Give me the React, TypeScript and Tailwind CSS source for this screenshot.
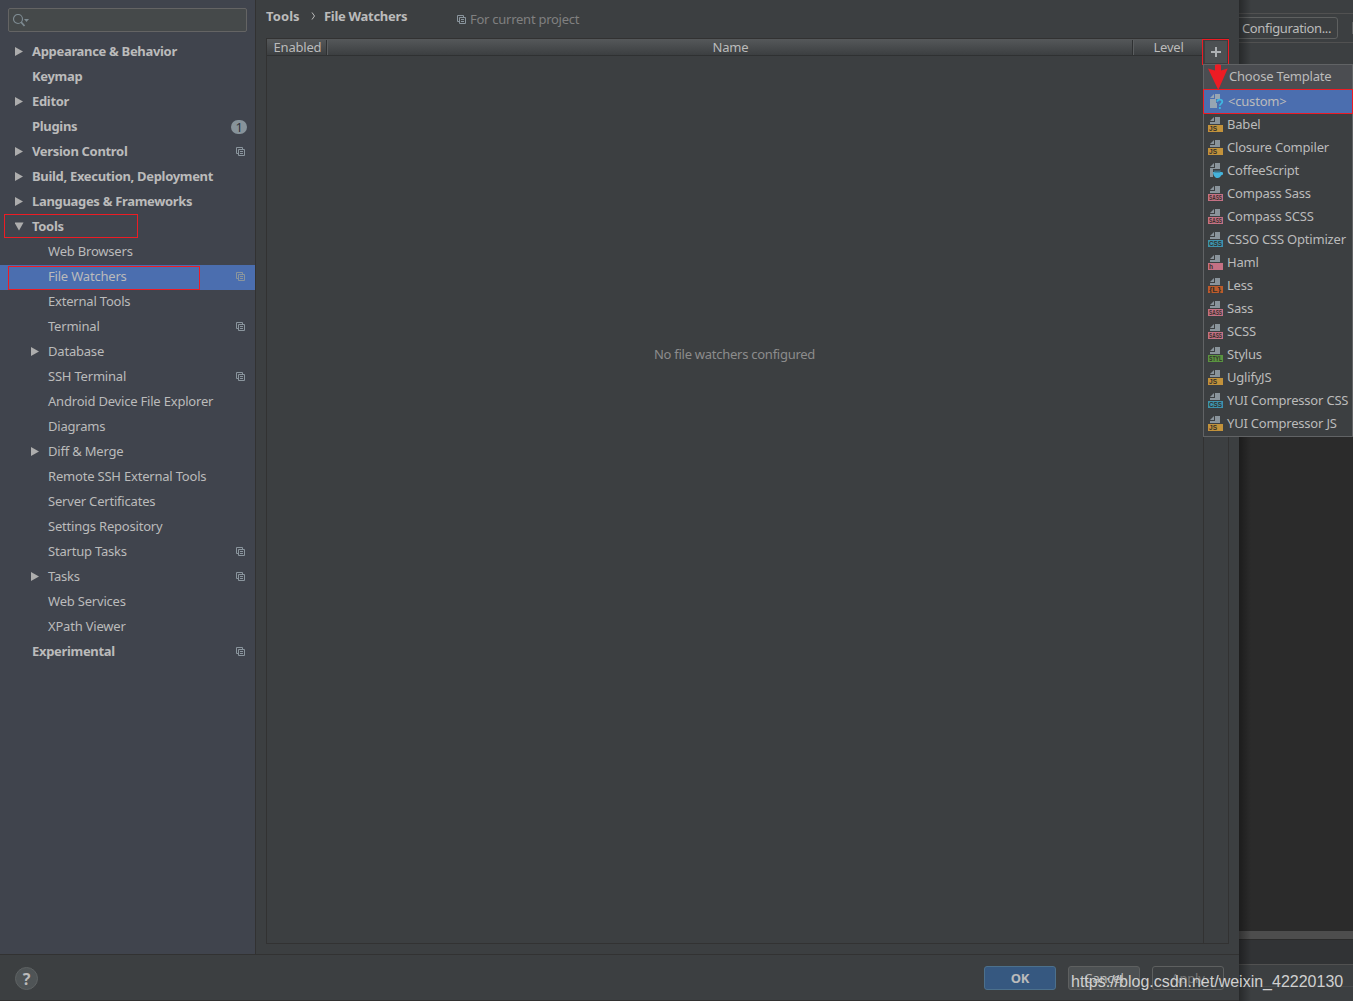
import React from 'react';

interface TreeItem {
    label: string;
    level?: number;
    arrow?: 'right' | 'down';
    copy?: boolean;
    badge?: number;
    selected?: boolean;
    marked?: boolean;
}

const treeItems: TreeItem[] = [
    { label: 'Appearance & Behavior', arrow: 'right' },
    { label: 'Keymap' },
    { label: 'Editor', arrow: 'right' },
    { label: 'Plugins', badge: 1 },
    { label: 'Version Control', arrow: 'right', copy: true },
    { label: 'Build, Execution, Deployment', arrow: 'right' },
    { label: 'Languages & Frameworks', arrow: 'right' },
    { label: 'Tools', arrow: 'down', marked: true },
    { label: 'Web Browsers', level: 1 },
    { label: 'File Watchers', level: 1, copy: true, selected: true, marked: true },
    { label: 'External Tools', level: 1 },
    { label: 'Terminal', level: 1, copy: true },
    { label: 'Database', level: 1, arrow: 'right' },
    { label: 'SSH Terminal', level: 1, copy: true },
    { label: 'Android Device File Explorer', level: 1 },
    { label: 'Diagrams', level: 1 },
    { label: 'Diff & Merge', level: 1, arrow: 'right' },
    { label: 'Remote SSH External Tools', level: 1 },
    { label: 'Server Certificates', level: 1 },
    { label: 'Settings Repository', level: 1 },
    { label: 'Startup Tasks', level: 1, copy: true },
    { label: 'Tasks', level: 1, arrow: 'right', copy: true },
    { label: 'Web Services', level: 1 },
    { label: 'XPath Viewer', level: 1 },
    { label: 'Experimental', copy: true },
];

interface Template {
    label: string;
    tag?: string;
    color?: string;
    tagWidth?: number;
}

const templates: Template[] = [
    { label: 'Babel', tag: 'JS', color: '#c2923b', tagWidth: 8 },
    { label: 'Closure Compiler', tag: 'JS', color: '#c2923b', tagWidth: 8 },
    { label: 'CoffeeScript' },
    { label: 'Compass Sass', tag: 'SASS', color: '#c57184', tagWidth: 13 },
    { label: 'Compass SCSS', tag: 'SASS', color: '#c57184', tagWidth: 13 },
    { label: 'CSSO CSS Optimizer', tag: 'CSS', color: '#3d93ae', tagWidth: 13 },
    { label: 'Haml', tag: 'h', color: '#c57184', tagWidth: 4 },
    { label: 'Less', tag: '{L}', color: '#bd5b2b', tagWidth: 12 },
    { label: 'Sass', tag: 'SASS', color: '#c57184', tagWidth: 13 },
    { label: 'SCSS', tag: 'SASS', color: '#c57184', tagWidth: 13 },
    { label: 'Stylus', tag: 'STYL', color: '#5a9440', tagWidth: 13 },
    { label: 'UglifyJS', tag: 'JS', color: '#c2923b', tagWidth: 8 },
    { label: 'YUI Compressor CSS', tag: 'CSS', color: '#3d93ae', tagWidth: 13 },
    { label: 'YUI Compressor JS', tag: 'JS', color: '#c2923b', tagWidth: 8 },
];

const CopyIcon: React.FC = () => (
    <svg width="9" height="9" viewBox="0 0 9 9" fill="none" stroke="#8a959d" className="shrink-0">
        <path d="M2.5 6.5h-2v-6h6v2M2.500 2.500h6v6h-6zM4 4.500h3M4 6.500h3" />
    </svg>
);

const Arrow: React.FC<{ dir?: 'right' | 'down' }> = ({ dir }) => (
    <svg width="9" height="9" viewBox="0 0 9 9" fill="#adadad" className="shrink-0">
        {dir === 'right' && <path d="M0 0v9l8-4.500z" />}
        {dir === 'down' && <path d="M-.5 .5h9l-4.500 8z" />}
    </svg>
);

const FileIcon: React.FC<{ tag?: string; color?: string; tagWidth?: number }> = ({ tag, color, tagWidth }) => (
    <svg width="16" height="16" viewBox="0 0 16 16" className="shrink-0">
        <path d="M2 5l4-4v4z" fill="#8a949b" />
        {tag ? (
            <>
                <path d="M7 1h5v7H2V6h5z" fill="#8a949b" />
                <path d="M0 9h15v7H0z" fill={color} />
                <text
                    x="1"
                    y="15"
                    textLength={tagWidth}
                    lengthAdjust="spacingAndGlyphs"
                    fill="#33302b"
                    className="font-['Liberation_Sans'] text-[7px] font-bold tracking-normal"
                >
                    {tag}
                </text>
            </>
        ) : (
            <>
                <path d="M7 1h5v6H5v8H2V6h5z" fill="#8a949b" />
                <path d="M5 10h8.500l1.500.5v2l-2 1c-.5 1.500-1.500 2.500-3.500 2.500S5.200 14 5 10z" fill="#44b3dc" />
                <path d="M5.500 8.500h7.500l-1 2H6.500z" fill="#3c6f86" />
            </>
        )}
    </svg>
);

const CustomIcon: React.FC = () => (
    <svg width="16" height="16" viewBox="0 0 16 16" className="shrink-0">
        <path d="M2 5l4-4v4z" fill="#97a5b3" />
        <path d="M7 1h5v5H8v4h1v5H2V6h5z" fill="#97a5b3" />
        <path d="M9.300 8.800c0-3 5-3 5 0 0 1.700-2.500 1.900-2.500 4" fill="none" stroke="#40b6e0" strokeWidth="1.800" />
        <path d="M10.900 14h1.900v2h-1.900z" fill="#40b6e0" />
    </svg>
);

const TreeRow: React.FC<{ item: TreeItem }> = ({ item }) => (
    <div
        className={`relative flex h-[25px] items-center pr-[10px] pb-[2px] ${
            item.level ? 'pl-[31px]' : 'pl-[15px] font-bold tracking-[-0.32px]'
        } ${item.selected ? 'bg-[#4b6eaf]' : ''}`}
    >
        <Arrow dir={item.arrow} />
        <span className="ml-2 flex-1 pb-[2px]">{item.label}</span>
        {item.copy && <CopyIcon />}
        {item.badge && (
            <span className="-mr-[2px] flex h-[14px] w-4 items-center justify-center rounded-full bg-[#87939a] text-[13px] font-normal text-[#2f343b]">
                {item.badge}
            </span>
        )}
        {item.marked && (
            <div
                className={`absolute border border-[#ed1c24] ${
                    item.selected ? 'top-px left-2 h-6 w-48' : '-top-px left-1 h-6 w-[134px]'
                }`}
            />
        )}
    </div>
);

const SettingsTree: React.FC = () => (
    <div className="w-[255px] shrink-0 bg-[#40444d] pt-2">
        <div className="mx-2 flex h-6 items-center rounded-[2px] border border-[#646464] bg-[#45494a] pl-1">
            <svg width="17" height="13" viewBox="0 0 17 13" fill="none" stroke="#7d8a91">
                <circle cx="5" cy="5" r="4.500" strokeWidth="1.200" />
                <path d="M8 8l3.500 4" strokeWidth="1.800" />
                <path d="M11 5h5l-2.500 3z" fill="#7d8a91" stroke="none" />
            </svg>
        </div>
        <div className="mt-2">
            {treeItems.map((item) => (
                <TreeRow key={item.label} item={item} />
            ))}
        </div>
    </div>
);

const TemplatePopup: React.FC = () => (
    <div className="absolute top-16 left-[1203px] h-[373px] w-[150px] border border-[#616365] bg-[#3c3f41]">
        <div className="flex h-6 items-center bg-[#4b4d51] pb-[2px] pl-[25px]">Choose Template</div>
        <div className="-mx-px flex h-[25px] items-start border border-[#ed1c24] bg-[#4b6eaf] pt-[3px] pl-1">
            <CustomIcon />
            <span className="ml-1">&lt;custom&gt;</span>
        </div>
        <div className="-mt-px">
            {templates.map((t) => (
                <div key={t.label} className="flex h-[23px] items-start pt-[3px] pl-1 whitespace-nowrap">
                    <FileIcon tag={t.tag} color={t.color} tagWidth={t.tagWidth} />
                    <span className="ml-[3px]">{t.label}</span>
                </div>
            ))}
        </div>
    </div>
);

const WatchersTable: React.FC = () => (
    <div className="mt-[38px] mr-[10px] ml-[10px] flex h-[906px] flex-1 border border-[#323232]">
        <div className="flex-1">
            <div className="flex h-[17px] items-center border-b border-[#2f3132] bg-linear-to-b from-[#55585a] to-[#3c3f41]">
                <div className="w-[60px] border-r border-[#2f3132] pl-[2px] text-center leading-[15px]">Enabled</div>
                <div className="flex-1 border-x border-l-[#5b5e60] border-r-[#2f3132] pl-px text-center leading-[15px]">
                    Name
                </div>
                <div className="w-[70px] border-l border-[#5b5e60] text-center leading-[15px]">Level</div>
            </div>
            <div className="pt-[290px] pr-px text-center tracking-[-0.26px] text-[#8c8c8c]">No file watchers configured</div>
        </div>
        <div className="w-[25px] border-l border-[#323232]" />
    </div>
);

const EditorBehind: React.FC = () => (
    <div className="relative flex w-[114px] flex-col overflow-hidden bg-[#3c3f41]">
        <div className="h-[14px] border-b border-[#515151]" />
        <div className="flex h-[29px] items-center border-b border-[#515151]">
            <div className="-ml-1 flex h-[22px] w-[103px] shrink-0 items-center rounded-[3px] border border-[#5e6060] pl-[6px] tracking-[-0.36px]">
                Configuration...
            </div>
            <div className="ml-[14px] h-3 w-1 shrink-0 bg-[#5e6060]" />
        </div>
        <div className="h-[21px]" />
        <div className="h-[867px] bg-[#2b2b2b]" />
        <div className="h-2 bg-[#4d4d4d]" />
        <div className="h-[26px] border-t border-b border-t-[#2b2b2b] border-b-[#515151] bg-[#313335]" />
        <div className="h-[22px] border-b border-[#484a4c]" />
        <div className="absolute inset-y-0 left-0 w-3 bg-linear-to-r from-black/35 to-transparent" />
    </div>
);

const App: React.FC = () => (
    <div className="relative flex h-[1001px] w-[1353px] overflow-hidden bg-[#3c3f41] font-['Noto_Sans',sans-serif] text-[13px] leading-4 tracking-[-0.2px] text-[#bbbbbb]">
        <div className="flex w-[1239px] shrink-0 flex-col">
            <div className="flex h-[954px]">
                <SettingsTree />
                <div className="relative flex flex-1 border-l border-[#323232]">
                    <div className="absolute top-1 left-[10px] flex items-center whitespace-nowrap">
                        <span className="w-[34px] font-bold tracking-[0.1px]">Tools</span>
                        <svg width="5" height="8" viewBox="0 0 5 8" fill="none" stroke="#bbbbbb" className="ml-[11px]">
                            <path d="M1 .5l2.500 3.500L1 7.500" />
                        </svg>
                        <span className="ml-2 w-[83px] font-bold tracking-[-0.3px]">File Watchers</span>
                        <div className="mt-[7px] ml-[50px] flex items-center gap-1 tracking-[-0.26px] text-[#808080]">
                            <CopyIcon />
                            For current project
                        </div>
                    </div>
                    <WatchersTable />
                </div>
            </div>
            <div className="flex h-[47px] items-center border-t border-b border-[#323232] pr-[15px] pl-[15px]">
                <div className="mt-[2px] flex h-[23px] w-[23px] items-center justify-center rounded-full border border-[#5e6263] bg-[#4f5456] text-[16px] font-bold">
                    ?
                </div>
                <div className="ml-auto flex gap-3">
                    <div className="flex h-6 w-[72px] items-center justify-center rounded-[3px] border border-[#4c708c] bg-[#365880] font-bold">
                        OK
                    </div>
                    <div className="flex h-6 w-[72px] items-center justify-center rounded-[3px] border border-[#5e6060] bg-[#4c5052]">
                        Cancel
                    </div>
                    <div className="flex h-6 w-[72px] items-center justify-center rounded-[3px] border border-[#5e6060] text-[#777777]">
                        Apply
                    </div>
                </div>
            </div>
        </div>
        <EditorBehind />

        <div className="absolute top-[39px] left-[1202px] flex h-[26px] w-[27px] items-end justify-end border border-[#ed1c24] bg-[#3c3f41] pr-px pb-px">
            <div className="flex h-[22px] w-[22px] items-center justify-center bg-[#4c5052]">
                <svg width="10" height="10" viewBox="0 0 10 10" fill="#adb1b3">
                    <path d="M4 0h2v4h4v2H6v4H4V6H0V4h4z" />
                </svg>
            </div>
        </div>
        <TemplatePopup />
        <svg width="22" height="27" viewBox="0 0 22 27" fill="#ed1c24" className="absolute top-16 left-[1207px]">
            <path d="M8 1q3-1.500 6 0v5.500l6.700-2L11.300 26 1 4.500l7 2z" />
        </svg>
        <div className="absolute top-[972px] left-[1071px] font-['Liberation_Sans'] text-[16px] leading-5 tracking-normal whitespace-nowrap text-[#d0d0d0]">
            https://blog.csdn.net/weixin_42220130
        </div>
    </div>
);

export default App;
